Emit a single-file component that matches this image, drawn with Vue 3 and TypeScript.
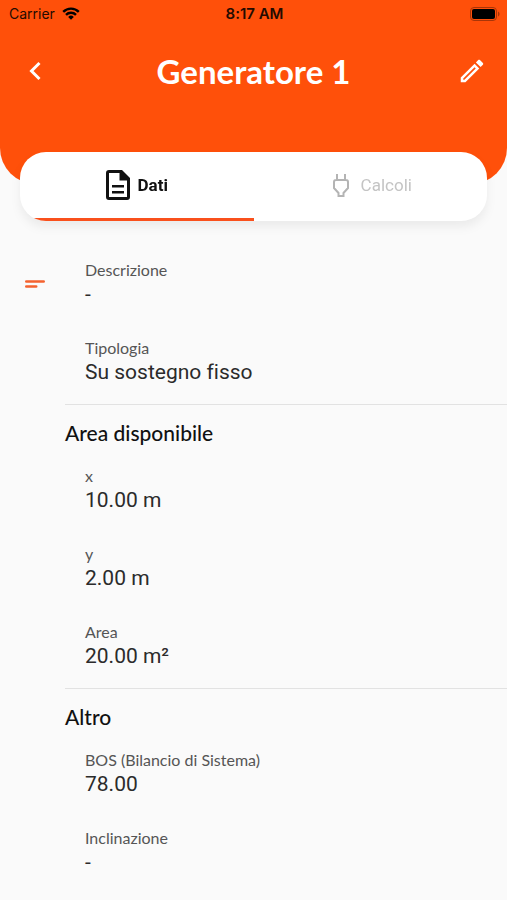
<script setup lang="ts">
import { ref } from 'vue'

interface Field {
  label: string
  value: string
}

interface Section {
  title?: string
  fields: Field[]
}

type Tab = 'dati' | 'calcoli'

const activeTab = ref<Tab>('dati')

const sections: Section[] = [
  {
    fields: [
      { label: 'Descrizione', value: '-' },
      { label: 'Tipologia', value: 'Su sostegno fisso' },
    ],
  },
  {
    title: 'Area disponibile',
    fields: [
      { label: 'x', value: '10.00 m' },
      { label: 'y', value: '2.00 m' },
      { label: 'Area', value: '20.00 m²' },
    ],
  },
  {
    title: 'Altro',
    fields: [
      { label: 'BOS (Bilancio di Sistema)', value: '78.00' },
      { label: 'Inclinazione', value: '-' },
    ],
  },
]
</script>

<template>
  <div class="screen">
    <header class="header">
      <div class="status">
        <span class="carrier">
          Carrier
          <svg class="wifi" viewBox="0 0 18 13" aria-hidden="true">
            <path d="M1.2 4.9a11 11 0 0 1 15.6 0" />
            <path d="M4 7.8a7 7 0 0 1 10 0" />
            <path class="solid" d="M9 12.8 6.2 9.9a4 4 0 0 1 5.6 0z" />
          </svg>
        </span>
        <span class="clock">8:17 AM</span>
        <svg class="battery" viewBox="0 0 30 14" aria-hidden="true">
          <rect class="shell" x="0.5" y="0.5" width="26" height="13" rx="3.5" />
          <rect x="2" y="2" width="23" height="10" rx="2" />
          <path class="cap" d="M28 4.5c2 .8 2 4.2 0 5z" />
        </svg>
      </div>
      <div class="bar">
        <button class="icon-button" type="button" aria-label="Indietro">
          <svg class="back" viewBox="0 0 24 24" aria-hidden="true">
            <path d="M16.5 4 8.500 12l8 8" />
          </svg>
        </button>
        <h1>Generatore 1</h1>
        <button class="icon-button" type="button" aria-label="Modifica">
          <svg class="pencil" viewBox="0 0 24 24" aria-hidden="true">
            <path
              d="M14.060 9.020l.92.92L5.920 19H5v-.92l9.060-9.060M17.660 3c-.25 0-.51.1-.7.290l-1.830 1.830 3.750 3.750 1.830-1.830c.39-.39.39-1.020 0-1.410l-2.340-2.340c-.2-.2-.45-.29-.71-.29zm-3.600 3.190L3 17.250V21h3.750L17.810 9.940l-3.750-3.750z"
            />
          </svg>
        </button>
      </div>
    </header>

    <nav class="tabs" role="tablist">
      <button
        class="tab"
        :class="{ active: activeTab === 'dati' }"
        type="button"
        role="tab"
        :aria-selected="activeTab === 'dati'"
        @click="activeTab = 'dati'"
      >
        <svg class="document" viewBox="0 0 24 30" aria-hidden="true">
          <path
            fill-rule="evenodd"
            d="M3 0h13l8 8v19a3 3 0 0 1-3 3H3a3 3 0 0 1-3-3V3a3 3 0 0 1 3-3zM3 3v24h18V10.500h-7.500V3z"
          />
          <path d="M6 15h12v2.500H6zM6 21h12v2.500H6z" />
        </svg>
        Dati
      </button>
      <button
        class="tab"
        :class="{ active: activeTab === 'calcoli' }"
        type="button"
        role="tab"
        :aria-selected="activeTab === 'calcoli'"
        @click="activeTab = 'calcoli'"
      >
        <svg class="plug" viewBox="0 0 24 24" aria-hidden="true">
          <path d="M8 1v6M16 1v6M7 7h10q2 0 2 2v6l-4.500 5v3h-5v-3L5 15V9q0-2 2-2z" />
        </svg>
        Calcoli
      </button>
    </nav>

    <main class="details">
      <svg class="lines" viewBox="0 0 20 8" aria-hidden="true">
        <path d="M1.300 1.500h17.400M1.300 6.500h9.900" />
      </svg>
      <div class="sections">
        <section v-for="(section, i) in sections" :key="i" class="section">
          <h2 v-if="section.title">{{ section.title }}</h2>
          <dl>
            <div v-for="field in section.fields" :key="field.label" class="field">
              <dt>{{ field.label }}</dt>
              <dd>{{ field.value }}</dd>
            </div>
          </dl>
        </section>
      </div>
    </main>
  </div>
</template>

<style>
body {
  margin: 0;
  background: #fafafa;
}
</style>

<style scoped>
.screen {
  min-height: 100vh;
  background: #fafafa;
  color: #2b2b2b;
  font-family: Roboto, 'Liberation Sans', sans-serif;
  font-variant-ligatures: none;
}

.header {
  box-sizing: border-box;
  height: 184px;
  border-radius: 0 0 36px 36px;
  background: #ff500a;
}

.status {
  display: grid;
  grid-template-columns: 1fr auto 1fr;
  align-items: center;
  height: 27px;
  padding: 0 7px 0 9px;
  color: #240b01;
  font-family: Inter, sans-serif;
  font-size: 14px;
}

.carrier {
  display: flex;
  align-items: center;
  gap: 7px;
}

.wifi {
  width: 18px;
  height: 13px;
  fill: none;
  stroke: #000;
  stroke-width: 2.4;
}

.wifi .solid {
  fill: #000;
  stroke: none;
}

.clock {
  font-size: 15px;
  font-weight: 600;
}

.battery {
  justify-self: end;
  width: 30px;
  height: 14px;
}

.battery .shell {
  fill: none;
  stroke: #a83508;
}

.battery .cap {
  fill: #a83508;
}

.bar {
  display: flex;
  align-items: center;
  justify-content: space-between;
  height: 88px;
  padding: 0 20px;
}

.icon-button {
  display: flex;
  align-items: center;
  justify-content: center;
  width: 30px;
  height: 44px;
  padding: 0;
  border: 0;
  background: none;
}

.back {
  width: 24px;
  height: 24px;
  fill: none;
  stroke: #fff;
  stroke-width: 3;
}

.pencil {
  width: 30px;
  height: 30px;
  fill: #fff;
}

h1 {
  margin: 0;
  color: #fff;
  font-family: Lato, sans-serif;
  font-size: 33px;
  font-weight: 700;
  line-height: 40px;
}

.tabs {
  position: relative;
  display: flex;
  height: 69px;
  margin: -32px 20px 0;
  overflow: hidden;
  border-radius: 26px;
  background: #fff;
  filter: drop-shadow(0 6px 5px rgb(0 0 0 / 6%));
}

.tab {
  display: flex;
  flex: 1;
  align-items: center;
  justify-content: center;
  gap: 8px;
  padding: 0;
  border: 0;
  border-bottom: 3px solid transparent;
  background: none;
  color: #c4c4c4;
  font-family: inherit;
  font-size: 17px;
}

.tab.active {
  border-bottom-color: #f9501c;
  color: #111;
  font-weight: 700;
}

.document {
  width: 24px;
  height: 30px;
  fill: currentColor;
}

.plug {
  width: 24px;
  height: 24px;
  fill: none;
  stroke: #b4b4b4;
  stroke-width: 2;
}

.details {
  display: flex;
  align-items: flex-start;
  padding-top: 39px;
}

.lines {
  flex: none;
  width: 20px;
  height: 8px;
  margin: 20px 20px 0 25px;
  fill: none;
  stroke: #f4622f;
  stroke-width: 2.6;
  stroke-linecap: round;
}

.sections {
  flex: 1;
}

.section + .section {
  margin-top: 18px;
  padding-top: 14px;
  border-top: 1px solid #e2e2e2;
}

h2 {
  margin: 0 0 19px;
  color: #111;
  font-family: Lato, sans-serif;
  font-size: 21px;
  font-weight: 500;
  line-height: 28px;
}

dl {
  display: flex;
  flex-direction: column;
  gap: 30px;
  margin: 0;
  padding-left: 20px;
}

dt {
  color: #555;
  font-family: Lato, sans-serif;
  font-size: 16px;
  line-height: 20px;
}

dd {
  margin: 0;
  font-size: 21px;
  line-height: 28px;
}
</style>
